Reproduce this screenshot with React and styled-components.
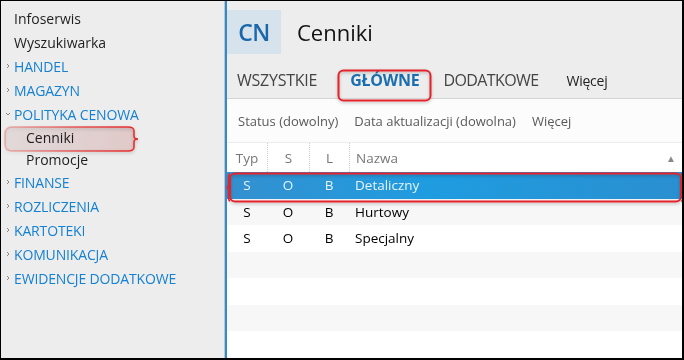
import React from "react";
import styled, { createGlobalStyle } from "styled-components";

const Global = createGlobalStyle`
  html, body { margin: 0; padding: 0; background: #fff; }
  body { font-family: "Open Sans", "Noto Sans", sans-serif; }
  * { box-sizing: border-box; }
`;

const Frame = styled.div`
  position: relative;
  width: 684px;
  height: 360px;
  border-style: solid;
  border-color: #000;
  border-width: 1px 2px 2px 1px;
  display: flex;
  overflow: hidden;
`;

const Sidebar = styled.nav`
  width: 224px;
  flex: none;
  background: #ededed;
  border-right: 1px solid #c4c4c4;
  padding-top: 5px;
  display: flex;
  flex-direction: column;
`;

const NavItem = styled.div`
  display: flex;
  align-items: center;
  height: ${(p) => (p.$sub ? 22 : 24)}px;
  padding-left: ${(p) => (p.$sub ? 25 : 13)}px;
  position: relative;
  font-size: 14px;
  color: ${(p) => (p.$group ? "#1581d2" : "#1e1e1e")};
  letter-spacing: ${(p) => (p.$group ? "-0.15px" : "0")};
  white-space: nowrap;
`;

const Chevron = styled.svg`
  position: absolute;
  left: 4px;
  top: 50%;
  transform: translateY(-50%);
`;

const Main = styled.main`
  flex: 1;
  display: flex;
  flex-direction: column;
  border-left: 2px solid #2f8bd2;
  background: #fff;
  min-width: 0;
`;

const Header = styled.header`
  background: #ededed;
  display: flex;
  flex-direction: column;
`;

const TitleRow = styled.div`
  display: flex;
  align-items: center;
  height: 61px;
  padding-top: 1px;
`;

const Badge = styled.div`
  width: 54px;
  height: 44px;
  background: #d6e3ed;
  color: #1a68aa;
  font-size: 23px;
  font-weight: 600;
  display: flex;
  align-items: center;
  justify-content: center;
  letter-spacing: -0.5px;
`;

const Title = styled.h1`
  margin: 0 0 0 16px;
  font-weight: 400;
  font-size: 22px;
  color: #111;
`;

const Tabs = styled.div`
  display: flex;
  align-items: center;
  height: 37px;
  padding-left: 10px;
  border-bottom: 1px solid #d4d4d4;
`;

const Tab = styled.div`
  font-size: ${(p) => (p.$small ? 14 : 16)}px;
  font-weight: ${(p) => (p.$active ? 700 : 400)};
  color: ${(p) => (p.$active ? "#1b6fb0" : p.$small ? "#222" : "#444")};
  margin-right: ${(p) => p.$gap}px;
  letter-spacing: ${(p) => (p.$tight ? "-0.6px" : "-0.25px")};
  white-space: nowrap;
`;

const Filters = styled.div`
  display: flex;
  align-items: center;
  height: 44px;
  padding-left: 11px;
  gap: 16px;
  background: #fcfcfc;
  border-bottom: 1px solid #ececec;
  font-size: 13px;
  color: #5a5a5a;
`;

const Table = styled.div`
  display: flex;
  flex-direction: column;
`;

const HeadRow = styled.div`
  display: grid;
  grid-template-columns: 40px 42px 40px 1fr;
  height: 29px;
  align-items: center;
  font-size: 13.5px;
  color: #777;
`;

const HeadCell = styled.div`
  position: relative;
  padding-left: ${(p) => (p.$left ? 6 : 0)}px;
  height: 100%;
  display: flex;
  align-items: center;
  justify-content: ${(p) => (p.$left ? "flex-start" : "center")};
  border-left: ${(p) => (p.$sep ? "1px dotted #d0d0d0" : "none")};
`;

const SortArrow = styled.span`
  position: absolute;
  right: 6px;
  font-size: 10px;
  color: #8a8a8a;
`;

const Row = styled.div`
  display: grid;
  grid-template-columns: 40px 42px 40px 1fr;
  height: 26.5px;
  align-items: center;
  font-size: 13.5px;
  color: ${(p) => (p.$selected ? "#e6f3fc" : "#000")};
  background: ${(p) =>
    p.$selected
      ? "linear-gradient(90deg, #3490cf 0%, #1f9ce0 45%, #2a8fd0 100%)"
      : p.$odd
      ? "#f7f7f7"
      : "#fff"};
`;

const Cell = styled.div`
  text-align: ${(p) => (p.$left ? "left" : "center")};
  padding-left: ${(p) => (p.$left ? 6 : 0)}px;
  white-space: nowrap;
`;

const Overlay = styled.svg`
  position: absolute;
  left: 0;
  top: 0;
  pointer-events: none;
  overflow: visible;
`;

const nav = [
  { label: "Infoserwis" },
  { label: "Wyszukiwarka" },
  { label: "HANDEL", group: true },
  { label: "MAGAZYN", group: true },
  { label: "POLITYKA CENOWA", group: true, open: true },
  { label: "Cenniki", sub: true },
  { label: "Promocje", sub: true },
  { label: "FINANSE", group: true },
  { label: "ROZLICZENIA", group: true },
  { label: "KARTOTEKI", group: true },
  { label: "KOMUNIKACJA", group: true },
  { label: "EWIDENCJE DODATKOWE", group: true },
];

const rows = [
  ["S", "O", "B", "Detaliczny"],
  ["S", "O", "B", "Hurtowy"],
  ["S", "O", "B", "Specjalny"],
  null,
  null,
  null,
  null,
];

function ChevronIcon({ open }) {
  return (
    <Chevron width="6" height="6" viewBox="0 0 6 6">
      {open ? (
        <path d="M1 2 L3 4 L5 2" fill="none" stroke="#8a8a8a" strokeWidth="1" />
      ) : (
        <path d="M2 1 L4 3 L2 5" fill="none" stroke="#8a8a8a" strokeWidth="1" />
      )}
    </Chevron>
  );
}

function brace(x, top, bottom, dir, w = 3) {
  const mid = (top + bottom) / 2;
  const d = dir;
  const a = x + w * d;
  return `M ${x} ${top} Q ${a} ${top} ${a} ${top + 4} L ${a} ${mid - 3} Q ${a} ${mid} ${a + 2 * d} ${mid} Q ${a} ${mid} ${a} ${mid + 3} L ${a} ${bottom - 4} Q ${a} ${bottom} ${x} ${bottom}`;
}

export default function App() {
  return (
    <>
      <Global />
      <Frame>
        <Sidebar>
          {nav.map((n) => (
            <NavItem key={n.label} $group={n.group} $sub={n.sub}>
              {n.group && <ChevronIcon open={n.open} />}
              {n.label}
            </NavItem>
          ))}
        </Sidebar>
        <Main>
          <Header>
            <TitleRow>
              <Badge>CN</Badge>
              <Title>Cenniki</Title>
            </TitleRow>
            <Tabs>
              <Tab $gap={33}>WSZYSTKIE</Tab>
              <Tab $gap={24} $active>GŁÓWNE</Tab>
              <Tab $gap={28} $tight>DODATKOWE</Tab>
              <Tab $small>Więcej</Tab>
            </Tabs>
          </Header>
          <Filters>
            <span>Status (dowolny)</span>
            <span>Data aktualizacji (dowolna)</span>
            <span>Więcej</span>
          </Filters>
          <Table>
            <HeadRow>
              <HeadCell>Typ</HeadCell>
              <HeadCell $sep>S</HeadCell>
              <HeadCell $sep>L</HeadCell>
              <HeadCell $sep $left>
                Nazwa
                <SortArrow>▲</SortArrow>
              </HeadCell>
            </HeadRow>
            {rows.map((r, i) => (
              <Row key={i} $selected={i === 0} $odd={i % 2 === 1}>
                {r ? (
                  <>
                    <Cell>{r[0]}</Cell>
                    <Cell>{r[1]}</Cell>
                    <Cell>{r[2]}</Cell>
                    <Cell $left>{r[3]}</Cell>
                  </>
                ) : null}
              </Row>
            ))}
          </Table>
        </Main>
        <Overlay width="684" height="360" viewBox="0 0 684 360">
          <defs>
            <linearGradient id="pinkFill" x1="0" x2="1" y1="0" y2="0">
              <stop offset="0" stopColor="#f4eaea" />
              <stop offset="1" stopColor="#f1d9d9" />
            </linearGradient>
            <linearGradient id="pinkStroke" x1="0" x2="1" y1="0" y2="0">
              <stop offset="0" stopColor="#e52a2a" stopOpacity="0.3" />
              <stop offset="0.6" stopColor="#e52a2a" stopOpacity="0.8" />
              <stop offset="1" stopColor="#e52a2a" stopOpacity="1" />
            </linearGradient>
            <filter id="sh" x="-10%" y="-30%" width="120%" height="160%">
              <feDropShadow dx="0" dy="1.5" stdDeviation="1.5" floodColor="#000" floodOpacity="0.25" />
            </filter>
          </defs>
          <rect x="4" y="126" width="130" height="24" rx="7" fill="url(#pinkFill)" style={{ mixBlendMode: "multiply" }} />
          <path
            d="M 11 126 L 127 126 Q 133 126 133 130 L 133 135 Q 133 138 137 138 Q 133 138 133 141 L 133 146 Q 133 150 127 150 L 11 150 Q 4 150 4 143 L 4 133 Q 4 126 11 126 Z"
            fill="none"
            stroke="url(#pinkStroke)"
            strokeWidth="1.5"
            filter="url(#sh)"
          />
          <rect x="337.5" y="69.5" width="92" height="30" rx="5" fill="none" stroke="#e3242b" strokeWidth="2" filter="url(#sh)" />
          <rect x="229" y="172.5" width="451" height="28" rx="5" fill="none" stroke="#e3242b" strokeWidth="2" filter="url(#sh)" />
          <path d={brace(680, 173, 200, 1)} fill="none" stroke="#e3242b" strokeWidth="1.5" />
          <path d={brace(229, 173, 200, -1, 1.5)} fill="none" stroke="#e3242b" strokeWidth="1.5" />
        </Overlay>
      </Frame>
    </>
  );
}
